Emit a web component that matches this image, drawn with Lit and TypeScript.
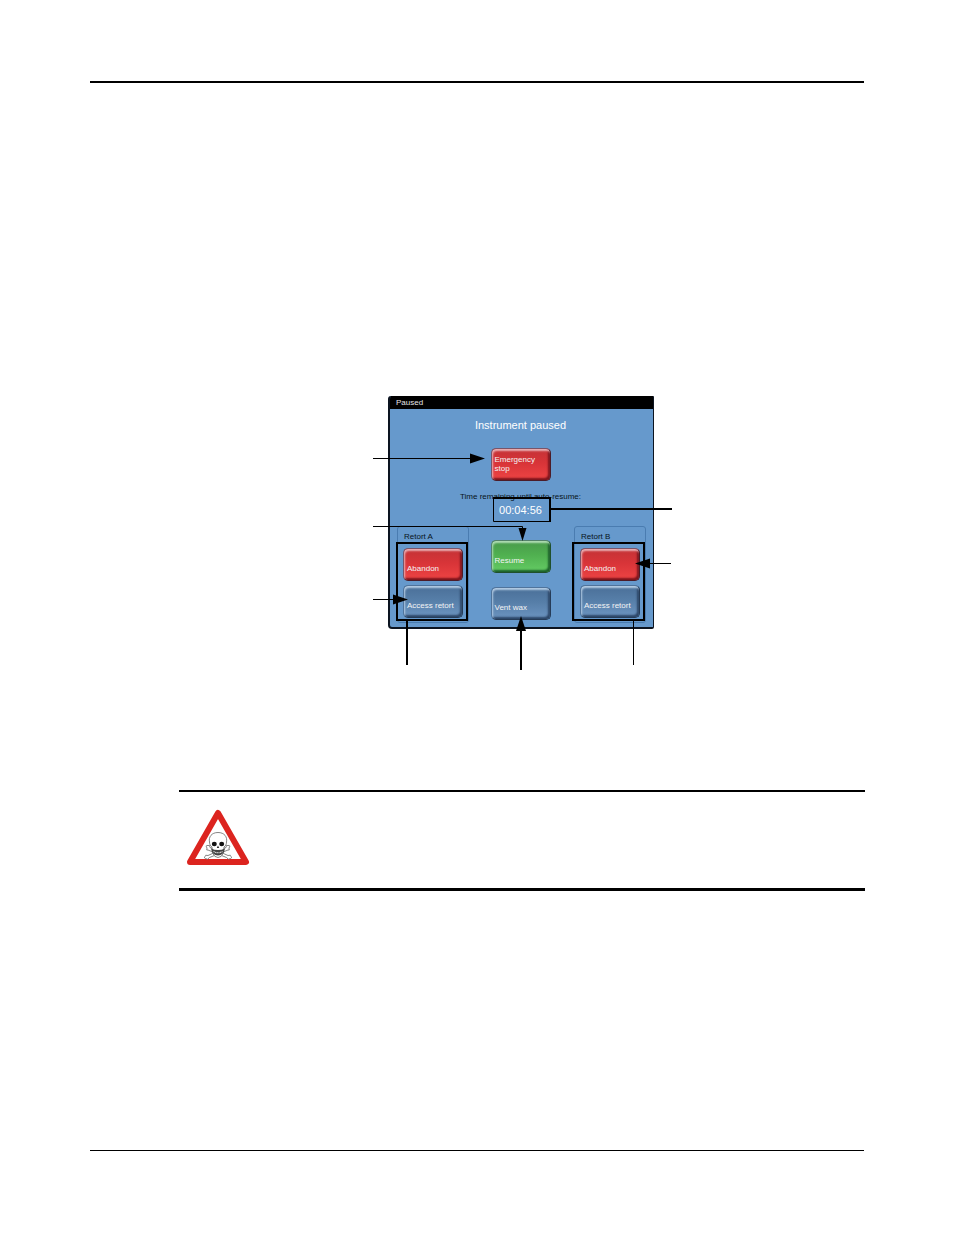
import { LitElement, html, css, svg } from "lit";
import { customElement, property } from "lit/decorators.js";

/** Glossy touchscreen button in one of three tones. */
@customElement("touch-button")
export class TouchButton extends LitElement {
  @property() tone: "red" | "green" | "blue" = "blue";
  @property() label = "";

  static styles = css`
    :host {
      display: block;
    }
    .button {
      box-sizing: border-box;
      display: flex;
      align-items: flex-end;
      width: 60px;
      height: 33px;
      margin: 0;
      padding: 0 3px 7px;
      border: 1px solid;
      border-radius: 5px;
      color: #f4f4f4;
      font: 8px/9px "Liberation Sans", Arial, sans-serif;
      text-align: left;
      white-space: pre-line;
    }
    .red {
      border-color: #7a5468 #4c1c28 #4c1c28 #7a5468;
      background: linear-gradient(#c43236, #d83438 45%, #ee4444);
      box-shadow: inset 1px 2px 2px #eab0b4, inset -2px -2px 2px #7c141c;
    }
    .green {
      border-color: #54826c #20502c #20502c #54826c;
      background: linear-gradient(#489a4a, #50b050 45%, #64cc64);
      box-shadow: inset 1px 2px 2px #b0dcb4, inset -2px -2px 2px #1c602a;
    }
    .blue {
      border-color: #50749c #263c58 #263c58 #50749c;
      background: linear-gradient(#4a6f98, #567ea8 45%, #6c94c0);
      box-shadow: inset 1px 2px 2px #b4cce4, inset -2px -2px 2px #2c4668;
    }
  `;

  render() {
    return html`<button class="button ${this.tone}" type="button">${this.label}</button>`;
  }
}

/** The instrument's "Paused" screen. */
@customElement("paused-panel")
export class PausedPanel extends LitElement {
  static styles = css`
    :host {
      display: block;
      box-sizing: border-box;
      border: solid #0c1420;
      border-width: 0 1px 2px 2px;
      border-radius: 3px 1px 2px 4px;
      background: #6699cc;
      color: #081420;
      font: 8px/10px "Liberation Sans", Arial, sans-serif;
      overflow: hidden;
    }
    .titlebar {
      padding: 2px 6px 1px;
      background: #000;
      color: #e4e4e4;
    }
    .summary {
      display: flex;
      flex-direction: column;
      align-items: center;
      padding-right: 2px;
    }
    .heading {
      margin: 9px 0 16px;
      color: #fff;
      font-size: 11px;
      font-weight: normal;
      line-height: 14px;
    }
    .caption {
      margin: 11px 0 1px;
    }
    .clock {
      color: #fff;
      font-size: 11px;
      line-height: 14px;
    }
    .controls {
      display: flex;
      justify-content: space-between;
      align-items: flex-start;
      padding: 9px 7px 4px;
    }
    .retort {
      min-width: 0;
      margin: 0;
      padding: 5px 5px 4px;
      border: 1px solid #4a7cb0;
      border-radius: 3px;
    }
    .name {
      margin: 0 1px 6px;
      font-size: 8px;
      font-weight: normal;
    }
    .stack {
      display: grid;
      gap: 4px;
    }
    .middle {
      display: grid;
      gap: 14px;
      padding: 14px 2px 0 0;
    }
  `;

  private retort(name: string) {
    return html`
      <section class="retort">
        <h2 class="name">${name}</h2>
        <div class="stack">
          <touch-button tone="red" label="Abandon"></touch-button>
          <touch-button tone="blue" label="Access retort"></touch-button>
        </div>
      </section>
    `;
  }

  render() {
    return html`
      <div class="titlebar">Paused</div>
      <div class="summary">
        <h1 class="heading">Instrument paused</h1>
        <touch-button tone="red" label=${"Emergency\nstop"}></touch-button>
        <div class="caption">Time remaining until auto-resume:</div>
        <time class="clock">00:04:56</time>
      </div>
      <div class="controls">
        ${this.retort("Retort A")}
        <div class="middle">
          <touch-button tone="green" label="Resume"></touch-button>
          <touch-button tone="blue" label="Vent wax"></touch-button>
        </div>
        ${this.retort("Retort B")}
      </div>
    `;
  }
}

const callouts = svg`
  <g fill="none" stroke="#000" stroke-width="2">
    <path d="M121 102H178V126" />
    <path d="M178 113H300" />
    <rect x="25" y="147" width="70" height="77" />
    <rect x="201" y="147" width="71" height="77" />
    <path d="M35 225V269M149 234V274" />
  </g>
  <path d="M121.500 101V125.500H179" fill="none" stroke="#000" />
  <g fill="none" stroke="#000" stroke-width="1">
    <path d="M1 62.500H100M1 130.500H150.500V134M1 203.500H24M276 167.500H299M261.500 225V269" />
  </g>
  <path d="M98 57.500L113 62.500L98 67.500ZM146.500 132H154.500L150.500 145ZM21 198.500L36 203.500L21 208.500ZM278 162.500L263 167.500L278 172.500ZM144 235L149 220L154 235Z" />
`;

const skull = svg`
  <path d="M33 5L61 54H5Z" fill="#fff" stroke="#dc241f" stroke-width="6" stroke-linejoin="round" />
  <g fill="#fff" stroke="#666" stroke-width=".8" stroke-linejoin="round">
    <path d="M22 40q-2-3 1-2.500q2-1 2 2L43 47.500q3-1 3 1q1.500 1.500-.5 2q-2 2-4-1L23 42q-2 1-1-2Z" />
    <path d="M44 40q2-3-1-2.500q-2-1-2 2L23 47.500q-3-1-3 1q-1.500 1.500.5 2q2 2 4-1L43 42q2 1 1-2Z" />
    <path d="M33 24.500c-6.500 0-9.500 4.500-8.500 9.500c0 2.500 1 4 2.500 5l.5 6q2 4.500 5.500 4.500q3.500 0 5.500-4.500l.5-6c1.500-1 2.500-2.500 2.500-5c1-5-2-9.500-8.500-9.500Z" />
  </g>
  <ellipse cx="29.300" cy="36" rx="2.500" ry="2.300" fill="#111" />
  <ellipse cx="36.700" cy="36" rx="2.500" ry="2.300" fill="#111" />
  <path d="M33 37.500L31.800 40H34.200Z" fill="#222" />
  <path d="M26 40.500Q33 43.500 40 40.500Q38.500 47.500 33 47.500Q27.500 47.500 26 40.500Z" fill="#444" />
  <path d="M28.500 43.500Q33 46 37.500 43.500" fill="none" stroke="#ddd" stroke-width="1.200" stroke-dasharray="1.200 .5" />
`;

@customElement("app-root")
export class AppRoot extends LitElement {
  static styles = css`
    :host {
      display: block;
      min-height: 100vh;
      background: #fff;
    }
    .page {
      box-sizing: border-box;
      display: flex;
      flex-direction: column;
      min-height: 100vh;
      padding: 81px 89px 84px 90px;
    }
    .rule {
      margin: 0 1px 0 0;
      border: 0;
      border-top: 2px solid #000;
    }
    .foot {
      margin-top: auto;
      border-top-width: 1px;
    }
    .content {
      margin: 313px 0 0 89px;
    }
    .figure {
      position: relative;
      box-sizing: border-box;
      width: 300px;
      margin: 0 auto 120px;
      padding: 0 18px 41px 16px;
    }
    .callouts {
      position: absolute;
      top: 0;
      left: 0;
      width: 300px;
      height: 274px;
      pointer-events: none;
    }
    .warning {
      padding: 16px 6px 21px;
      border-top: 2px solid #000;
      border-bottom: 3px solid #000;
    }
    .sign {
      display: block;
      width: 66px;
      height: 59px;
    }
  `;

  render() {
    return html`
      <main class="page">
        <hr class="rule" />
        <div class="content">
          <figure class="figure">
            <paused-panel></paused-panel>
            <svg class="callouts" viewBox="0 0 300 274" aria-hidden="true">${callouts}</svg>
          </figure>
          <section class="warning">
            <svg class="sign" viewBox="0 0 66 59" aria-hidden="true">${skull}</svg>
          </section>
        </div>
        <hr class="rule foot" />
      </main>
    `;
  }
}
